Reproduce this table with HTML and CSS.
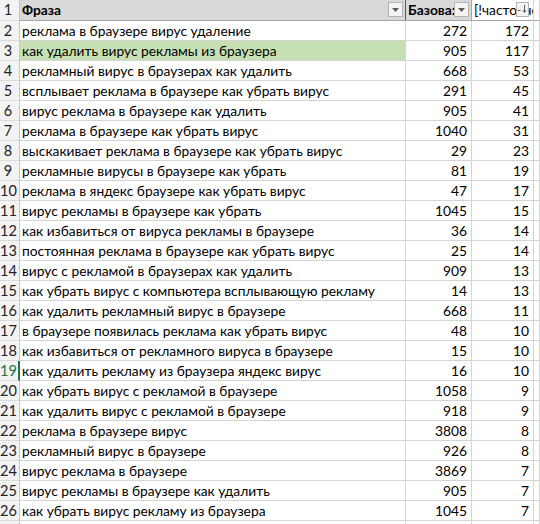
FILE: index.html
```html
<!DOCTYPE html>
<html>
<head>
<meta charset="utf-8">
<link rel="stylesheet" href="styles.css">
</head>
<body>
<div class="sheet">
  <div class="row head">
    <div class="rn">1</div>
    <div class="c a hd">Фраза<span class="fbtn"><svg width="7" height="4" viewBox="0 0 7 4"><path d="M0 0h7L3.5 4z" fill="#5a5a5a"/></svg></span></div>
    <div class="c b hd">Базова:<span class="fbtn"><svg width="7" height="4" viewBox="0 0 7 4"><path d="M0 0h7L3.5 4z" fill="#5a5a5a"/></svg></span></div>
    <div class="c cc hdw">[!частотность<span class="fbtn sorted"><svg width="11" height="9" viewBox="0 0 11 9"><path d="M0.5 5.5h3" stroke="#5a5a5a" stroke-width="1"/><path d="M7.5 0v7" stroke="#5a5a5a" stroke-width="1"/><path d="M5.5 5.5l2 2.5 2-2.5z" fill="#5a5a5a"/></svg></span></div>
    <div class="c d"></div>
  </div>
  <div class="row"><div class="rn">2</div><div class="c a">реклама в браузере вирус удаление</div><div class="c b n">272</div><div class="c cc n">172</div><div class="c d"></div></div>
  <div class="row"><div class="rn">3</div><div class="c a hl">как удалить вирус рекламы из браузера</div><div class="c b n">905</div><div class="c cc n">117</div><div class="c d"></div></div>
  <div class="row"><div class="rn">4</div><div class="c a">рекламный вирус в браузерах как удалить</div><div class="c b n">668</div><div class="c cc n">53</div><div class="c d"></div></div>
  <div class="row"><div class="rn">5</div><div class="c a">всплывает реклама в браузере как убрать вирус</div><div class="c b n">291</div><div class="c cc n">45</div><div class="c d"></div></div>
  <div class="row"><div class="rn">6</div><div class="c a">вирус реклама в браузере как удалить</div><div class="c b n">905</div><div class="c cc n">41</div><div class="c d"></div></div>
  <div class="row"><div class="rn">7</div><div class="c a">реклама в браузере как убрать вирус</div><div class="c b n">1040</div><div class="c cc n">31</div><div class="c d"></div></div>
  <div class="row"><div class="rn">8</div><div class="c a">выскакивает реклама в браузере как убрать вирус</div><div class="c b n">29</div><div class="c cc n">23</div><div class="c d"></div></div>
  <div class="row"><div class="rn">9</div><div class="c a">рекламные вирусы в браузере как убрать</div><div class="c b n">81</div><div class="c cc n">19</div><div class="c d"></div></div>
  <div class="row"><div class="rn">10</div><div class="c a">реклама в яндекс браузере как убрать вирус</div><div class="c b n">47</div><div class="c cc n">17</div><div class="c d"></div></div>
  <div class="row"><div class="rn">11</div><div class="c a">вирус рекламы в браузере как убрать</div><div class="c b n">1045</div><div class="c cc n">15</div><div class="c d"></div></div>
  <div class="row"><div class="rn">12</div><div class="c a">как избавиться от вируса рекламы в браузере</div><div class="c b n">36</div><div class="c cc n">14</div><div class="c d"></div></div>
  <div class="row"><div class="rn">13</div><div class="c a">постоянная реклама в браузере как убрать вирус</div><div class="c b n">25</div><div class="c cc n">14</div><div class="c d"></div></div>
  <div class="row"><div class="rn">14</div><div class="c a">вирус с рекламой в браузерах как удалить</div><div class="c b n">909</div><div class="c cc n">13</div><div class="c d"></div></div>
  <div class="row"><div class="rn">15</div><div class="c a">как убрать вирус с компьютера всплывающую рекламу</div><div class="c b n">14</div><div class="c cc n">13</div><div class="c d"></div></div>
  <div class="row"><div class="rn">16</div><div class="c a">как удалить рекламный вирус в браузере</div><div class="c b n">668</div><div class="c cc n">11</div><div class="c d"></div></div>
  <div class="row"><div class="rn">17</div><div class="c a">в браузере появилась реклама как убрать вирус</div><div class="c b n">48</div><div class="c cc n">10</div><div class="c d"></div></div>
  <div class="row"><div class="rn">18</div><div class="c a">как избавиться от рекламного вируса в браузере</div><div class="c b n">15</div><div class="c cc n">10</div><div class="c d"></div></div>
  <div class="row"><div class="rn act">19</div><div class="c a">как удалить рекламу из браузера яндекс вирус</div><div class="c b n">16</div><div class="c cc n">10</div><div class="c d"></div></div>
  <div class="row"><div class="rn">20</div><div class="c a">как убрать вирус с рекламой в браузере</div><div class="c b n">1058</div><div class="c cc n">9</div><div class="c d"></div></div>
  <div class="row"><div class="rn">21</div><div class="c a">как удалить вирус с рекламой в браузере</div><div class="c b n">918</div><div class="c cc n">9</div><div class="c d"></div></div>
  <div class="row"><div class="rn">22</div><div class="c a">реклама в браузере вирус</div><div class="c b n">3808</div><div class="c cc n">8</div><div class="c d"></div></div>
  <div class="row"><div class="rn">23</div><div class="c a">рекламный вирус в браузере</div><div class="c b n">926</div><div class="c cc n">8</div><div class="c d"></div></div>
  <div class="row"><div class="rn">24</div><div class="c a">вирус реклама в браузере</div><div class="c b n">3869</div><div class="c cc n">7</div><div class="c d"></div></div>
  <div class="row"><div class="rn">25</div><div class="c a">вирус рекламы в браузере как удалить</div><div class="c b n">905</div><div class="c cc n">7</div><div class="c d"></div></div>
  <div class="row"><div class="rn">26</div><div class="c a">как убрать вирус рекламу из браузера</div><div class="c b n">1045</div><div class="c cc n">7</div><div class="c d"></div></div>
  <div class="row"><div class="rn"></div><div class="c a"></div><div class="c b n"></div><div class="c cc n"></div><div class="c d"></div></div>
</div>
</body>
</html>
```
FILE: styles.css
```css
html, body {
  margin: 0;
  padding: 0;
  background: #ffffff;
  overflow: hidden;
}
.sheet {
  width: 540px;
  font-family: Lato, "Liberation Sans", sans-serif;
  font-size: 13.8px;
  color: #000;
}
.row {
  display: grid;
  grid-template-columns: 20px 386px 66px 62px 1fr;
  height: 20px;
}
.row.head {
  height: 21px;
}
.rn, .c {
  box-sizing: border-box;
  height: 100%;
  border-right: 1px solid #d4d4d4;
  border-bottom: 1px solid #d4d4d4;
  line-height: 19px;
  white-space: nowrap;
  overflow: hidden;
  position: relative;
}
.rn {
  background: #f3f3f3;
  border-right-color: #c6c6c6;
  border-bottom-color: #dadada;
  text-align: center;
  padding-right: 3px;
  font-size: 14.5px;
  color: #222;
}
.rn.act {
  color: #217346;
  border-right: 2px solid #217346;
}
.c.a {
  padding-left: 2px;
}
.n {
  text-align: right;
  padding-right: 4px;
}
.hl {
  background: #c6e0b4;
}
.head .c, .head .rn {
  line-height: 20px;
}
.hd {
  background: #d9d9d9;
  font-weight: bold;
  border-bottom: 1px solid #a6a6a6;
}
.c.b.hd {
  border-left: 1px solid #5a5a5a;
  margin-left: -1px;
  padding-left: 2px;
  border-right-color: #a6a6a6;
}
.hdw {
  padding-left: 2px;
  border-bottom: 1px solid #a6a6a6;
}
.head .d {
  border-bottom: 1px solid #a6a6a6;
}
.fbtn {
  position: absolute;
  top: 2px;
  right: 2px;
  width: 15px;
  height: 15px;
  box-sizing: border-box;
  background: #f4f4f4;
  border: 1px solid #b3b3b3;
  display: flex;
  align-items: center;
  justify-content: center;
}
.hdw .fbtn {
  right: 4px;
  width: 13px;
}
```
